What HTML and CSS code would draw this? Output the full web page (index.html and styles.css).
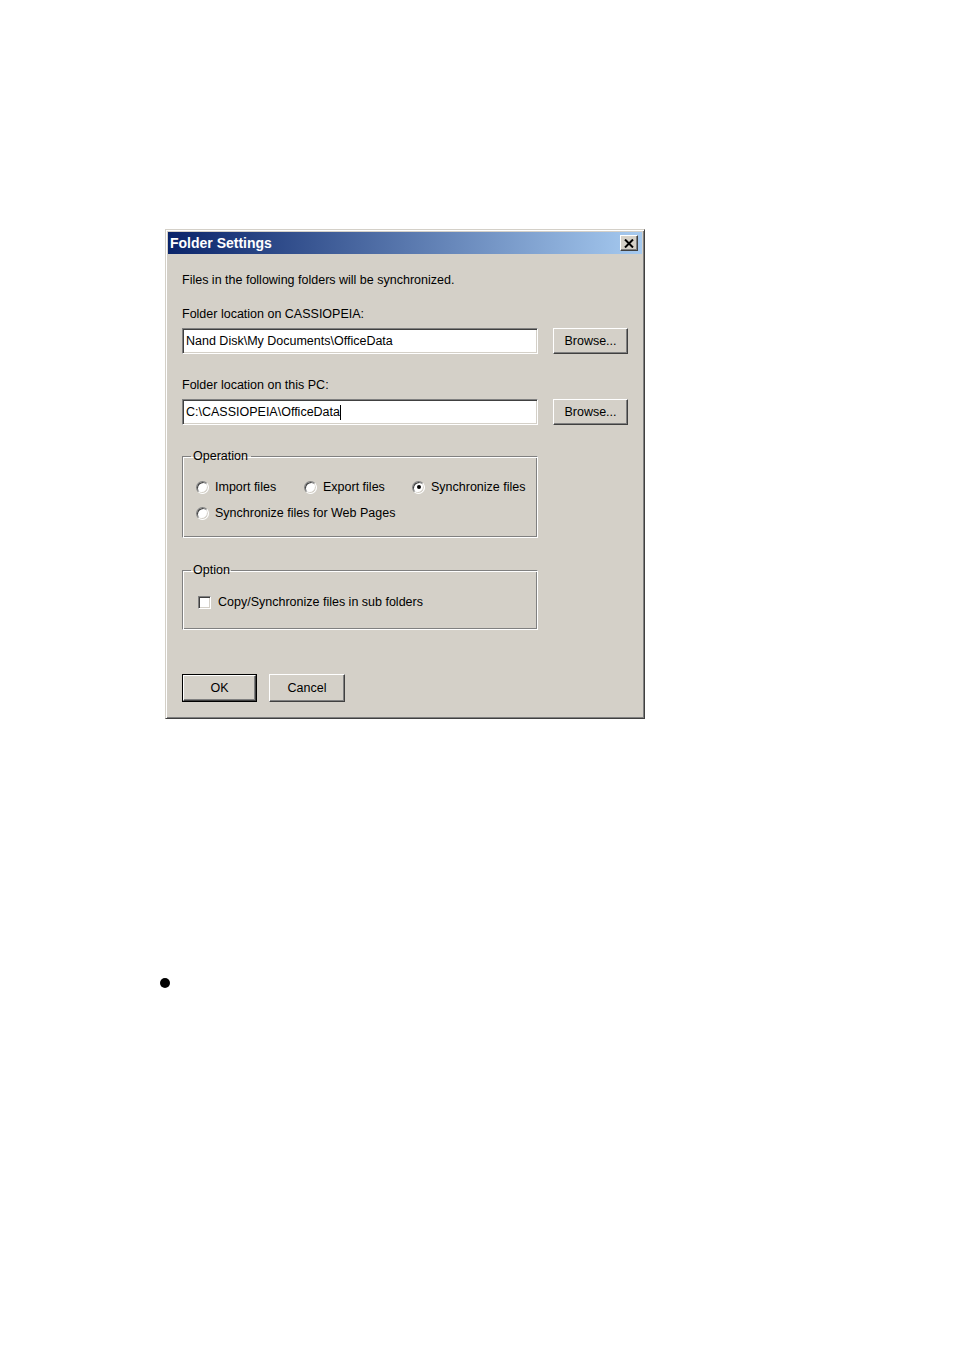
FILE: index.html
```html
<!DOCTYPE html>
<html>
<head>
<meta charset="utf-8">
<title>Folder Settings</title>
<link rel="stylesheet" href="styles.css">
</head>
<body>
<div class="page">
  <div class="dialog">
    <div class="titlebar">
      <span class="title">Folder Settings</span>
      <span class="close">
        <svg width="10" height="9" viewBox="0 0 10 9"><path d="M1 0.5 L9 8.5 M9 0.5 L1 8.5" stroke="#000" stroke-width="2" fill="none"/></svg>
      </span>
    </div>
    <div class="content">
      <div class="line intro">Files in the following folders will be synchronized.</div>
      <div class="line label">Folder location on CASSIOPEIA:</div>
      <div class="row">
        <div class="input"><span>Nand Disk\My Documents\OfficeData</span></div>
        <div class="btn browse">Browse...</div>
      </div>
      <div class="line label second">Folder location on this PC:</div>
      <div class="row">
        <div class="input"><span class="caret">C:\CASSIOPEIA\OfficeData</span></div>
        <div class="btn browse">Browse...</div>
      </div>
      <fieldset class="group operation">
        <legend>Operation</legend>
        <div class="radios">
          <div class="opt"><span class="radio"></span><span>Import files</span></div>
          <div class="opt"><span class="radio"></span><span>Export files</span></div>
          <div class="opt"><span class="radio checked"></span><span>Synchronize files</span></div>
        </div>
        <div class="opt row2"><span class="radio"></span><span>Synchronize files for Web Pages</span></div>
      </fieldset>
      <fieldset class="group option">
        <legend>Option</legend>
        <div class="opt"><span class="check"></span><span>Copy/Synchronize files in sub folders</span></div>
      </fieldset>
      <div class="buttons">
        <div class="default"><div class="btn ok">OK</div></div>
        <div class="btn cancel">Cancel</div>
      </div>
    </div>
  </div>
  <div class="bullet"></div>
</div>
</body>
</html>
```
FILE: styles.css
```css
html, body {
  margin: 0;
  padding: 0;
  background: #fff;
}
.page {
  padding: 229px 0 0 165px;
  font-family: "Liberation Sans", Arial, sans-serif;
  font-size: 12.5px;
  color: #000;
}
.dialog {
  width: 480px;
  box-sizing: border-box;
  background: #d4d0c8;
  border: 1px solid;
  border-color: #d4d0c8 #404040 #404040 #d4d0c8;
  box-shadow: inset 1px 1px #fff, inset -1px -1px #808080;
  padding: 2px 2px 3px 2px;
}
.titlebar {
  height: 22px;
  display: flex;
  align-items: center;
  justify-content: space-between;
  padding: 0 4px 0 2px;
  background: linear-gradient(to right, #0a246a, #a6caf0);
}
.title {
  color: #fff;
  font-weight: bold;
  font-size: 14px;
}
.close {
  width: 18px;
  height: 16px;
  box-sizing: border-box;
  background: #d4d0c8;
  border: 1px solid;
  border-color: #fff #404040 #404040 #fff;
  box-shadow: inset -1px -1px #808080;
  display: flex;
  align-items: center;
  justify-content: center;
}
.content {
  padding: 18px 0 13px 14px;
}
.line {
  height: 16px;
  line-height: 16px;
  white-space: nowrap;
}
.label {
  margin-top: 18px;
}
.label.second {
  margin-top: 23px;
}
.row {
  display: flex;
  gap: 15px;
  margin-top: 6px;
}
.input {
  width: 356px;
  height: 26px;
  box-sizing: border-box;
  background: #fff;
  border: 1px solid;
  border-color: #808080 #fff #fff #808080;
  box-shadow: inset 1px 1px #404040, inset -1px -1px #d4d0c8;
  padding: 0 3px;
  display: flex;
  align-items: center;
  white-space: nowrap;
}
.caret {
  border-right: 1px solid #000;
  line-height: 15px;
}
.btn {
  width: 75px;
  height: 26px;
  box-sizing: border-box;
  background: #d4d0c8;
  border: 1px solid;
  border-color: #fff #404040 #404040 #fff;
  box-shadow: inset -1px -1px #808080;
  display: flex;
  align-items: center;
  justify-content: center;
}
.group {
  width: 356px;
  box-sizing: border-box;
  margin: 23px 0 0 0;
  border: 1px solid;
  border-color: #808080 #fff #fff #808080;
  box-shadow: inset 1px 1px #fff, inset -1px -1px #808080;
  padding: 15px 0 16px 13px;
}
.group legend {
  padding: 0 3px 0 2px;
  margin-left: -5px;
  line-height: 16px;
  height: 16px;
}
.option {
  margin-top: 24px;
  padding: 16px 0 19px 14px;
}
.option legend {
  margin-left: -6px;
  padding: 0 1px 0 2px;
}
.radios {
  display: grid;
  grid-template-columns: 108px 108px auto;
}
.opt {
  display: flex;
  align-items: center;
  gap: 6px;
  height: 16px;
  white-space: nowrap;
}
.row2 {
  margin-top: 10px;
}
.radio {
  width: 13px;
  height: 13px;
  box-sizing: border-box;
  border-radius: 50%;
  background: #fff;
  border: 1px solid;
  border-color: #808080 #fff #fff #808080;
  box-shadow: inset 1px 1px #404040, inset -1px -1px #d4d0c8;
  display: flex;
  align-items: center;
  justify-content: center;
  flex: none;
}
.radio.checked::after {
  content: "";
  width: 4px;
  height: 4px;
  border-radius: 50%;
  background: #000;
}
.check {
  width: 13px;
  height: 13px;
  box-sizing: border-box;
  background: #fff;
  border: 1px solid;
  border-color: #808080 #fff #fff #808080;
  box-shadow: inset 1px 1px #404040, inset -1px -1px #d4d0c8;
  flex: none;
  margin-left: 1px;
  margin-right: 1px;
}
.buttons {
  display: flex;
  gap: 12px;
  margin-top: 44px;
}
.default {
  border: 1px solid #000;
  width: 75px;
  height: 28px;
  box-sizing: border-box;
}
.default .btn {
  width: 73px;
  height: 26px;
}
.cancel {
  height: 28px;
  width: 76px;
}
.bullet {
  width: 10px;
  height: 10px;
  border-radius: 50%;
  background: #000;
  margin: 259px 0 0 -5px;
}
```
